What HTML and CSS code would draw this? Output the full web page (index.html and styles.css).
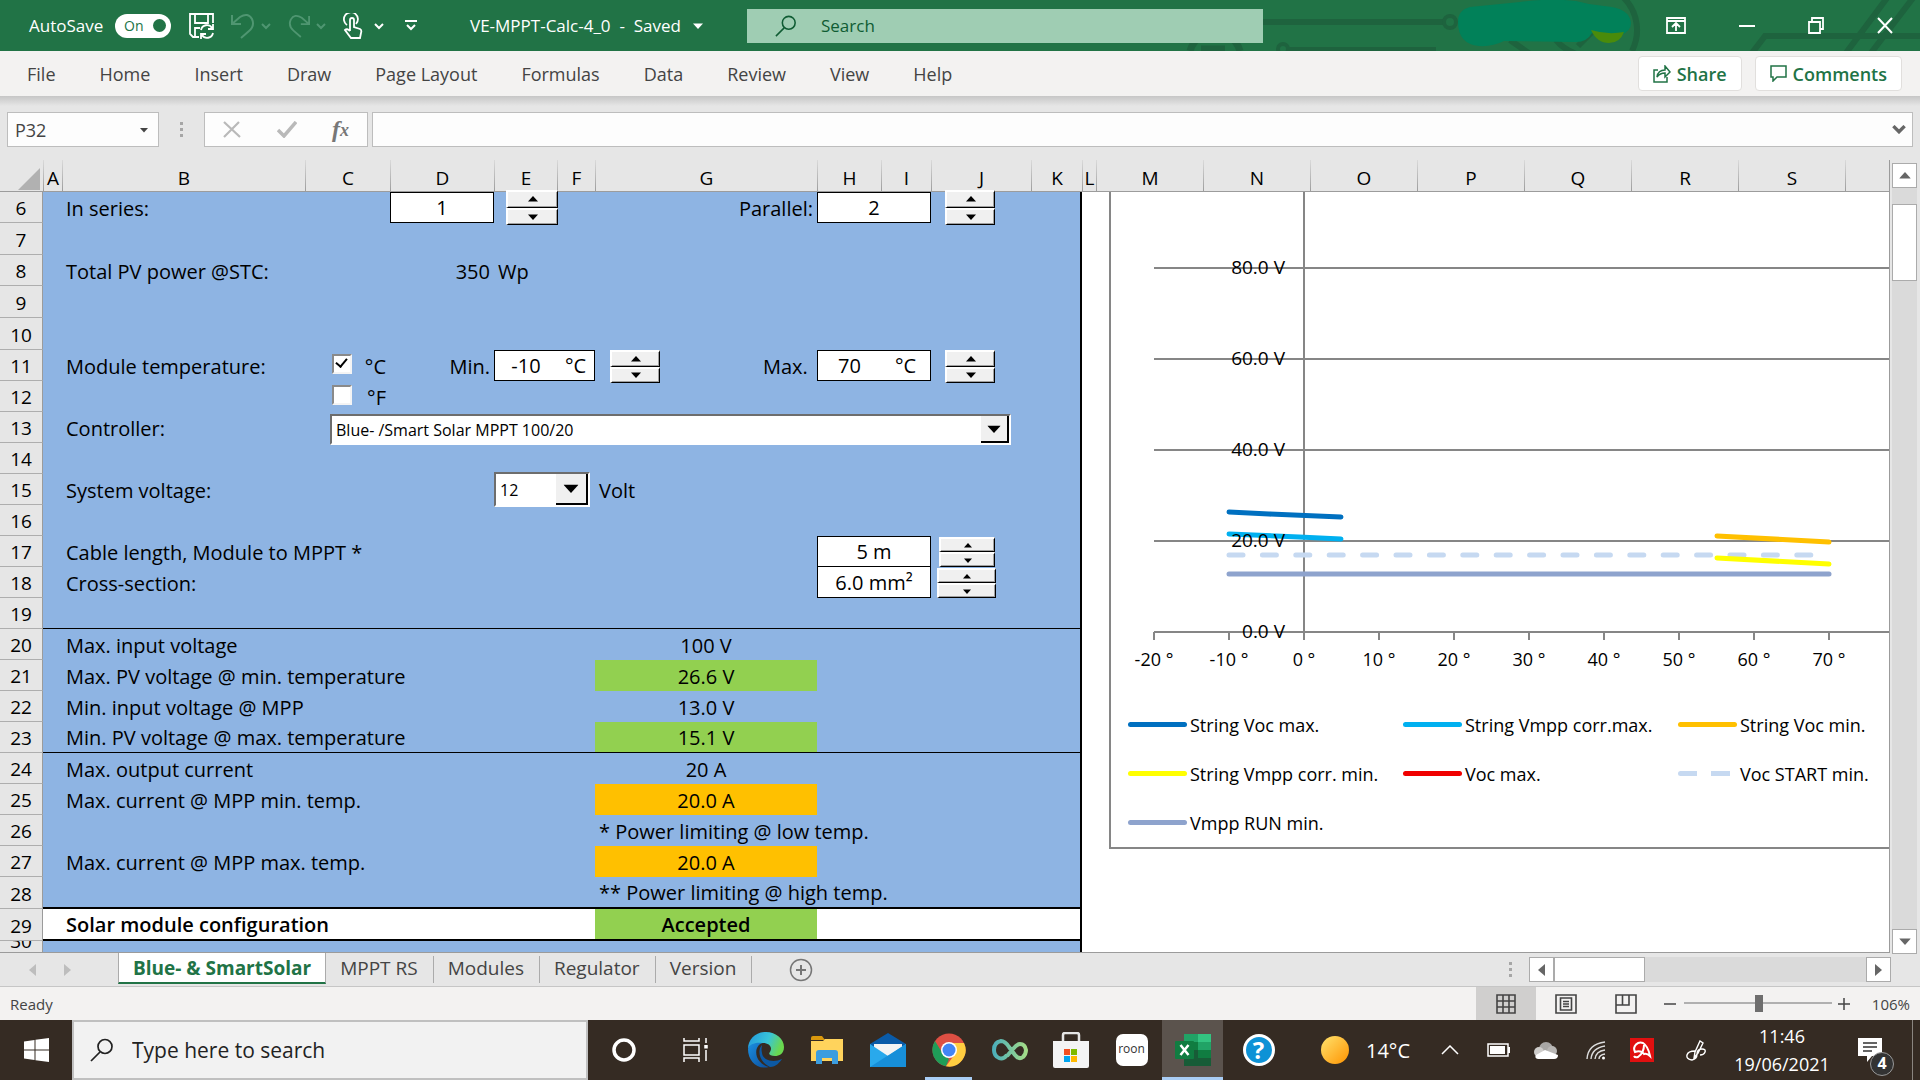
FILE: index.html
```html
<!DOCTYPE html>
<html lang="en">
<head>
<meta charset="utf-8">
<title>VE-MPPT-Calc-4_0 - Excel</title>
<link rel="stylesheet" href="styles.css">
</head>
<body>
<svg class="defs" aria-hidden="true">
  <symbol id="chev" viewBox="0 0 12 8"><path d="M2 2l4 4 4-4" fill="none" stroke="currentColor" stroke-width="2"/></symbol>
  <symbol id="up" viewBox="0 0 10 6"><path d="M5 0l5 5.500H0z" fill="currentColor"/></symbol>
  <symbol id="down" viewBox="0 0 10 6"><path d="M0 .5h10L5 6z" fill="currentColor"/></symbol>
  <symbol id="left" viewBox="0 0 7 12"><path d="M7 0v12L0 6z" fill="currentColor"/></symbol>
  <symbol id="right" viewBox="0 0 7 12"><path d="M0 0v12l7-6z" fill="currentColor"/></symbol>
  <symbol id="lens" viewBox="0 0 24 24"><circle cx="15" cy="8.500" r="7" fill="none" stroke="currentColor" stroke-width="1.700"/><path d="M10 14L1 23" stroke="currentColor" stroke-width="1.700"/></symbol>
</svg>

<header class="title-bar">
  <svg class="circuit" width="760" height="51" viewBox="1160 0 760 51" aria-hidden="true">
    <g fill="none" stroke="#1e633e" stroke-width="6">
      <path d="M1260 22h183"/><circle cx="1450" cy="22" r="6" stroke-width="4"/>
      <path d="M1190 51a26 26 0 0 1 50 0" stroke-width="7"/><path d="M1201 49h24" stroke-width="7"/>
      <circle cx="1283" cy="49" r="5" stroke-width="4"/><path d="M1288 50h148"/>
      <path d="M1752 53l13-17h155M1846 53l41-55M1871 53l42-55"/>
      <path d="M1624-2a46 46 0 0 1 8 53M1556 40q6 8 20 14M1510 40l20 14M1578 46l20-20"/>
    </g>
    <path d="M1458 22q0-12 12-15l50-5q30-4 56-1 14 4 28 5 26 2 27 17 0 8-10 12-14 6-29-2-5 9-16 9l-72-1q-12 6-25 5-21-2-21-24z" fill="#018159"/>
    <path d="M1591 30q16 5 33 2-4 11-15 11-12 0-18-13z" fill="#4a8b0b"/>
  </svg>
  <label class="autosave">AutoSave
    <button class="toggle" type="button" role="switch" aria-checked="true">On<span class="knob"></span></button>
  </label>
  <div class="quick">
    <button type="button" aria-label="Save"><svg width="26" height="26" viewBox="0 0 26 26" fill="none" stroke="#fff" stroke-width="1.800"><path d="M10 24H4l-3-3V1h23v9M6 1v9h13V1M6 23v-8h5"/><path d="M12 17a6 6 0 0 1 11-2M24 11v5h-5M24 20a6 6 0 0 1-11 2M12 26v-5h5"/></svg></button>
    <button type="button" class="dim" aria-label="Undo"><svg width="24" height="26" viewBox="0 0 24 26" fill="none" stroke="currentColor" stroke-width="2"><path d="M1 2v9h9M1 11L9 4q8-5 12 2 3 7-3 12l-8 7"/></svg><svg width="12" height="8"><use href="#chev"/></svg></button>
    <button type="button" class="dim" aria-label="Redo"><svg width="22" height="26" viewBox="0 0 24 26" fill="none" stroke="currentColor" stroke-width="2"><path d="M23 2v9h-9M23 11l-8-7q-8-5-12 2-3 7 3 12l8 7"/></svg><svg width="12" height="8"><use href="#chev"/></svg></button>
    <button type="button" class="touch" aria-label="Touch mode"><svg width="20" height="26" viewBox="0 0 20 26" fill="none" stroke="#fff" stroke-width="1.800"><path d="M4 12a7 7 0 1 1 9-1"/><path d="M7 18V7q0-2 2-2t2 2v7l6 2q2 1 1 4l-1 5H8l-6-8q2-2 5 1M11 10V7a2 2 0 1 0-4 0"/></svg><svg width="12" height="8"><use href="#chev"/></svg></button>
    <button type="button" aria-label="Customize toolbar"><svg width="12" height="12" viewBox="0 0 12 12" fill="none" stroke="#fff" stroke-width="2"><path d="M0 1h12M2 5l4 4 4-4"/></svg></button>
  </div>
  <button class="doc" type="button">VE-MPPT-Calc-4_0 &nbsp;-&nbsp; Saved <svg width="10" height="6"><use href="#down"/></svg></button>
  <label class="search"><svg width="22" height="22"><use href="#lens"/></svg><input type="text" placeholder="Search" aria-label="Search"></label>
  <div class="window-buttons">
    <button type="button" aria-label="Ribbon display"><svg width="20" height="17" viewBox="0 0 20 17" fill="none" stroke="#fff" stroke-width="1.800"><path d="M1 1h18v15H1zM1 4h18M10 14V7M6 10l4-4 4 4"/></svg></button>
    <button type="button" aria-label="Minimize"><svg width="16" height="17" viewBox="0 0 16 17"><path d="M0 9h16" stroke="#fff" stroke-width="2"/></svg></button>
    <button type="button" aria-label="Restore"><svg width="16" height="17" viewBox="0 0 16 17" fill="none" stroke="#fff" stroke-width="1.800"><path d="M1 5h11v11H1zM4 5V1h11v11h-3"/></svg></button>
    <button type="button" aria-label="Close"><svg width="16" height="17" viewBox="0 0 16 17"><path d="M1 1l14 15M15 1L1 16" stroke="#fff" stroke-width="2"/></svg></button>
  </div>
</header>

<nav class="ribbon">
  <a href="#">File</a><a href="#">Home</a><a href="#">Insert</a><a href="#">Draw</a><a href="#">Page Layout</a><a href="#">Formulas</a><a href="#">Data</a><a href="#">Review</a><a href="#">View</a><a href="#">Help</a>
  <div class="ribbon-actions">
    <button type="button"><svg width="18" height="18" viewBox="0 0 18 18" fill="none" stroke="#217346" stroke-width="1.500"><path d="M5 5H1v12h13v-5"/><path d="M4 12q1-7 8-7V1l5 6-5 5V8q-5 0-8 4z"/></svg>Share</button>
    <button type="button"><svg width="17" height="17" viewBox="0 0 17 17" fill="none" stroke="#217346" stroke-width="1.500"><path d="M1 1h15v11H7l-4 4v-4H1z"/></svg>Comments</button>
  </div>
</nav>

<div class="formula-bar">
  <label class="name-box"><input type="text" value="P32" aria-label="Name box"><svg width="8" height="6"><use href="#down"/></svg></label>
  <span class="dots"><i></i><i></i><i></i></span>
  <div class="fx-buttons">
    <button type="button" aria-label="Cancel"><svg width="18" height="17" viewBox="0 0 18 17"><path d="M1 1l16 15M16 1L1 16" stroke="#b9b9b9" stroke-width="2.200"/></svg></button>
    <button type="button" aria-label="Enter"><svg width="20" height="17" viewBox="0 0 20 17"><path d="M1 9l6 6L19 1" fill="none" stroke="#b9b9b9" stroke-width="3.500"/></svg></button>
    <button type="button" class="fx" aria-label="Insert function">f<sub>x</sub></button>
  </div>
  <label class="formula"><input type="text" aria-label="Formula"><svg width="14" height="9" viewBox="0 0 12 8"><path d="M1 1l5 5 5-5" fill="none" stroke="#666" stroke-width="3"/></svg></label>
</div>

<main class="sheet">
  <div class="grid">
    <table>
      <colgroup><col class="w-head"><col class="w-a"><col class="w-b"><col class="w-c"><col class="w-d"><col class="w-e"><col class="w-f"><col class="w-g"><col class="w-h"><col class="w-i"><col class="w-j"><col class="w-k"><col class="w-l"><col class="w-m"><col class="w-m"><col class="w-m"><col class="w-m"><col class="w-m"><col class="w-m"><col class="w-m"><col></colgroup>
      <thead>
        <tr><th class="corner"><svg width="22" height="22" viewBox="0 0 22 22"><path d="M22 0v22H0z" fill="#b1b1b1"/></svg></th><th>A</th><th>B</th><th>C</th><th>D</th><th>E</th><th>F</th><th>G</th><th>H</th><th>I</th><th>J</th><th>K</th><th>L</th><th>M</th><th>N</th><th>O</th><th>P</th><th>Q</th><th>R</th><th>S</th><th></th></tr>
      </thead>
      <tbody>
        <tr><th>6</th><td></td><td colspan="2">In series:</td><td class="box mid">1</td><td><span class="spin cut s-e"><button type="button" aria-label="More"><svg width="10" height="6"><use href="#up"/></svg></button><button type="button" aria-label="Less"><svg width="10" height="6"><use href="#down"/></svg></button></span></td><td></td><td class="end">Parallel:</td><td class="box mid" colspan="2">2</td><td><span class="spin cut s-j"><button type="button" aria-label="More"><svg width="10" height="6"><use href="#up"/></svg></button><button type="button" aria-label="Less"><svg width="10" height="6"><use href="#down"/></svg></button></span></td><td class="last"></td></tr>
        <tr class="tall"><th>7</th><td colspan="10"></td><td class="last"></td></tr>
        <tr><th>8</th><td></td><td colspan="2">Total PV power @STC:</td><td class="end">350</td><td>Wp</td><td colspan="5"></td><td class="last"></td></tr>
        <tr class="tall"><th>9</th><td colspan="10"></td><td class="last"></td></tr>
        <tr class="tall"><th>10</th><td colspan="10"></td><td class="last"></td></tr>
        <tr><th>11</th><td></td><td>Module temperature:</td><td class="end"><input class="tick" type="checkbox" id="deg-c" checked><label for="deg-c">°C</label></td><td class="end">Min.</td><td class="box mid open-r">-10</td><td class="box mid open-l">°C</td><td class="end"><span class="spin s-g"><button type="button" aria-label="More"><svg width="10" height="6"><use href="#up"/></svg></button><button type="button" aria-label="Less"><svg width="10" height="6"><use href="#down"/></svg></button></span>Max.&nbsp;</td><td class="box mid open-r">70</td><td class="box mid open-l">°C</td><td><span class="spin s-j"><button type="button" aria-label="More"><svg width="10" height="6"><use href="#up"/></svg></button><button type="button" aria-label="Less"><svg width="10" height="6"><use href="#down"/></svg></button></span></td><td class="last"></td></tr>
        <tr><th>12</th><td></td><td></td><td class="end"><input class="tick" type="checkbox" id="deg-f"><label for="deg-f">°F</label></td><td colspan="7"></td><td class="last"></td></tr>
        <tr><th>13</th><td></td><td><label for="controller">Controller:</label></td><td colspan="8"><span class="combo wide"><select id="controller"><option>Blue- /Smart Solar MPPT 100/20</option></select><span class="drop"><svg width="14" height="8" viewBox="0 0 10 6"><use href="#down"/></svg></span></span></td><td class="last"></td></tr>
        <tr><th>14</th><td colspan="10"></td><td class="last"></td></tr>
        <tr><th>15</th><td></td><td colspan="3"><label for="voltage">System voltage:</label></td><td colspan="2"><span class="combo volt"><select id="voltage"><option>12</option></select><span class="drop"><svg width="16" height="9" viewBox="0 0 10 6"><use href="#down"/></svg></span></span></td><td>Volt</td><td colspan="3"></td><td class="last"></td></tr>
        <tr><th>16</th><td colspan="10"></td><td class="last"></td></tr>
        <tr><th>17</th><td></td><td colspan="6">Cable length, Module to MPPT *</td><td class="box mid" colspan="2">5 m</td><td><span class="spin s-len"><button type="button" aria-label="More"><svg width="8" height="5"><use href="#up"/></svg></button><button type="button" aria-label="Less"><svg width="8" height="5"><use href="#down"/></svg></button></span></td><td class="last"></td></tr>
        <tr><th>18</th><td></td><td colspan="6">Cross-section:</td><td class="box mid under" colspan="2">6.0 mm²</td><td><span class="spin s-area"><button type="button" aria-label="More"><svg width="8" height="5"><use href="#up"/></svg></button><button type="button" aria-label="Less"><svg width="8" height="5"><use href="#down"/></svg></button></span></td><td class="last"></td></tr>
        <tr class="rule"><th>19</th><td colspan="10"></td><td class="last"></td></tr>
        <tr><th>20</th><td></td><td colspan="5">Max. input voltage</td><td class="mid">100 V</td><td colspan="3"></td><td class="last"></td></tr>
        <tr><th>21</th><td></td><td colspan="5">Max. PV voltage @ min. temperature</td><td class="mid ok">26.6 V</td><td colspan="3"></td><td class="last"></td></tr>
        <tr><th>22</th><td></td><td colspan="5">Min. input voltage @ MPP</td><td class="mid">13.0 V</td><td colspan="3"></td><td class="last"></td></tr>
        <tr class="rule"><th>23</th><td></td><td colspan="5">Min. PV voltage @ max. temperature</td><td class="mid ok">15.1 V</td><td colspan="3"></td><td class="last"></td></tr>
        <tr><th>24</th><td></td><td colspan="5">Max. output current</td><td class="mid">20 A</td><td colspan="3"></td><td class="last"></td></tr>
        <tr><th>25</th><td></td><td colspan="5">Max. current @ MPP min. temp.</td><td class="mid warn">20.0 A</td><td colspan="3"></td><td class="last"></td></tr>
        <tr><th>26</th><td></td><td colspan="5"></td><td colspan="4">* Power limiting @ low temp.</td><td class="last"></td></tr>
        <tr><th>27</th><td></td><td colspan="5">Max. current @ MPP max. temp.</td><td class="mid warn">20.0 A</td><td colspan="3"></td><td class="last"></td></tr>
        <tr class="tall thick"><th>28</th><td></td><td colspan="5"></td><td colspan="4">** Power limiting @ high temp.</td><td class="last"></td></tr>
        <tr class="tall thick result"><th>29</th><td></td><td colspan="5">Solar module configuration</td><td class="mid ok">Accepted</td><td colspan="3"></td><td class="last"></td></tr>
        <tr class="short rule"><th><span>30</span></th><td colspan="10"></td><td class="last"></td></tr>
      </tbody>
    </table>

    <figure class="chart">
      <svg width="100%" height="500" aria-label="String voltage over temperature">
        <g stroke="#868686" stroke-width="2" fill="none">
          <path d="M42 76h900M42 167h900M42 258h900M42 349h900"/>
          <path d="M42 440h900M192 0v440M42 440v8M117 440v8M192 440v8M267 440v8M342 440v8M417 440v8M492 440v8M567 440v8M642 440v8M717 440v8"/>
        </g>
        <g fill="none" stroke-width="5" stroke-linecap="round">
          <path d="M117 382h600" stroke="#8ea3cd"/>
          <path d="M117 363h586" stroke="#c6d9f1" stroke-dasharray="14 19.400"/>
          <path d="M117 320l40 2 72 3" stroke="#0070c0"/>
          <path d="M117 342l70 3 42 2" stroke="#00b0f0"/>
          <path d="M605 344l112 6" stroke="#ffc000"/>
          <path d="M605 366l112 6" stroke="#ffff00"/>
        </g>
        <g class="volts" text-anchor="end">
          <text x="173" y="82">80.0 V</text><text x="173" y="173">60.0 V</text><text x="173" y="264">40.0 V</text><text x="173" y="355">20.0 V</text><text x="173" y="446">0.0 V</text>
        </g>
        <g text-anchor="middle">
          <text x="42" y="474">-20 °</text><text x="117" y="474">-10 °</text><text x="192" y="474">0 °</text><text x="267" y="474">10 °</text><text x="342" y="474">20 °</text><text x="417" y="474">30 °</text><text x="492" y="474">40 °</text><text x="567" y="474">50 °</text><text x="642" y="474">60 °</text><text x="717" y="474">70 °</text>
        </g>
      </svg>
      <ul class="legend">
        <li><i class="k-navy"></i>String Voc max.</li><li><i class="k-cyan"></i>String Vmpp corr.max.</li><li><i class="k-gold"></i>String Voc min.</li>
        <li><i class="k-yellow"></i>String Vmpp corr. min.</li><li><i class="k-red"></i>Voc max.</li><li><i class="k-dash"></i>Voc START min.</li>
        <li><i class="k-steel"></i>Vmpp RUN min.</li>
      </ul>
    </figure>
  </div>
  <div class="v-scroll">
    <button type="button" aria-label="Scroll up"><svg width="12" height="7" viewBox="0 0 10 6"><use href="#up"/></svg></button>
    <div class="track"><div class="thumb"></div></div>
    <button type="button" aria-label="Scroll down"><svg width="12" height="7" viewBox="0 0 10 6"><use href="#down"/></svg></button>
  </div>
</main>

<div class="sheet-tabs">
  <div class="tab-arrows"><svg width="7" height="12"><use href="#left"/></svg><svg width="7" height="12"><use href="#right"/></svg></div>
  <a class="tab active" href="#">Blue- &amp; SmartSolar</a><a class="tab" href="#">MPPT RS</a><a class="tab" href="#">Modules</a><a class="tab" href="#">Regulator</a><a class="tab" href="#">Version</a>
  <button class="add" type="button" aria-label="New sheet"><svg width="24" height="24" viewBox="0 0 24 24" fill="none" stroke="#767676" stroke-width="1.500"><circle cx="12" cy="12" r="10.500"/><path d="M12 7v10M7 12h10" stroke-width="2"/></svg></button>
  <span class="dots"><i></i><i></i><i></i></span>
  <div class="h-scroll">
    <button type="button" aria-label="Scroll left"><svg width="7" height="12"><use href="#left"/></svg></button>
    <div class="track"><div class="thumb"></div></div>
    <button type="button" aria-label="Scroll right"><svg width="7" height="12"><use href="#right"/></svg></button>
  </div>
</div>

<div class="status">
  <span class="ready">Ready</span>
  <button type="button" class="view on" aria-label="Normal"><svg width="20" height="20" viewBox="0 0 20 20" fill="none" stroke="#444" stroke-width="1.600"><path d="M1 1h18v18H1zM1 7h18M1 13h18M7 1v18M13 1v18"/></svg></button>
  <button type="button" class="view" aria-label="Page layout"><svg width="22" height="20" viewBox="0 0 22 20" fill="none" stroke="#444" stroke-width="1.600"><path d="M1 1h20v18H1zM5.500 4h11v12h-11zM8 7.500h6M8 10h6M8 12.500h6"/></svg></button>
  <button type="button" class="view" aria-label="Page break preview"><svg width="22" height="20" viewBox="0 0 22 20" fill="none" stroke="#444" stroke-width="1.600"><path d="M1 1h20v18H1zM1 11h13V1M7.500 1v10"/></svg></button>
  <button type="button" class="zoom-step zoom-out" aria-label="Zoom out"><svg width="12" height="12"><path d="M0 6h12" stroke="#444" stroke-width="1.500"/></svg></button>
  <input class="zoom" type="range" min="0" max="100" value="51" aria-label="Zoom">
  <button type="button" class="zoom-step" aria-label="Zoom in"><svg width="12" height="12"><path d="M0 6h12M6 0v12" stroke="#444" stroke-width="1.500"/></svg></button>
  <span class="percent">106%</span>
</div>

<footer class="taskbar">
  <button class="start" type="button" aria-label="Start"><svg width="25" height="24" viewBox="0 0 25 24" fill="#fff"><path d="M0 3.500L10.500 2v9.500H0zM11.500 1.800L25 0v11.500H11.500zM0 12.500h10.500V22L0 20.500zM11.500 12.500H25V24l-13.500-1.800z"/></svg></button>
  <label class="task-search"><svg width="24" height="24"><use href="#lens"/></svg><input type="text" placeholder="Type here to search" aria-label="Type here to search"></label>
  <div class="apps">
    <button type="button" class="sys" aria-label="Cortana"><svg width="26" height="26" viewBox="0 0 26 26"><circle cx="13" cy="13" r="10" fill="none" stroke="#fff" stroke-width="3.500"/></svg></button>
    <button type="button" class="sys" aria-label="Task view"><svg width="26" height="24" viewBox="0 0 26 24" fill="none" stroke="#fff" stroke-width="1.500"><path d="M1 0v3h15V0M1 24v-4h15v4M1 7h15v10H1zM23 0v5M23 12v11"/><path d="M23 7v3.500" stroke-width="3.500"/></svg></button>
    <button type="button" aria-label="Edge"><svg width="36" height="36" viewBox="0 0 36 36"><defs><linearGradient id="e1" x1="0" y1="0" x2="1" y2=".3"><stop offset="0" stop-color="#2196dd"/><stop offset=".6" stop-color="#39c5d8"/><stop offset="1" stop-color="#6ad84f"/></linearGradient><linearGradient id="e2" x1="0" y1="0" x2="1" y2="1"><stop offset="0" stop-color="#1b8fe0"/><stop offset="1" stop-color="#0b4d9c"/></linearGradient></defs><path d="M0 17C0 7 8 0 18 0s18 7 18 15c0 7-5 9-9 9-5 0-7-2-5-4 3-5-1-9-7-9C7 11 1 14 0 17z" fill="url(#e1)"/><path d="M0 17c1-5 8-7 14-6-5 2-7 8-5 14 2 5 7 9 12 10-12 3-21-6-21-18z" fill="url(#e2)"/><path d="M14 13c-5 5-3 17 8 22 6 0 10-5 12-8-8 4-19 2-20-6-1-4 0-6 0-8z" fill="#0c59a4"/></svg></button>
    <button type="button" aria-label="File Explorer"><svg width="34" height="28" viewBox="0 0 34 28"><path d="M1 2q0-2 2-2h9l3 4H1z" fill="#d9980d"/><path d="M1 5h12l2-2h18v22H1z" fill="#ffd35c"/><path d="M6 28V17q0-3 3-3h16q3 0 3 3v11h-6v-6H12v6z" fill="#3c9ddf"/></svg></button>
    <button type="button" aria-label="Mail"><svg width="36" height="34" viewBox="0 0 36 34"><path d="M0 11L18 0l18 11v8H0z" fill="#0a5ba8"/><path d="M4 11h28v14H4z" fill="#f4f4f4"/><path d="M0 11l18 12 18-12v23H0z" fill="#29a9ec"/><path d="M0 34l36-23v23z" fill="#178fd9"/></svg></button>
    <button type="button" class="running" aria-label="Chrome"><svg width="34" height="34" viewBox="0 0 34 34"><circle cx="17" cy="17" r="16.500" fill="#dd4f43"/><path d="M3 8l8 13 6 5-3 7.300A16.500 16.500 0 0 1 3 8z" fill="#1f9d58"/><path d="M17 10h15a16.500 16.500 0 0 1-18 23.300L23 21z" fill="#ffcd40"/><circle cx="17" cy="17" r="8" fill="#fff"/><circle cx="17" cy="17" r="6.500" fill="#4285f4"/></svg></button>
    <button type="button" aria-label="Infinity"><svg width="36" height="24" viewBox="0 0 36 24" fill="none" stroke-width="4"><defs><linearGradient id="inf"><stop offset="0" stop-color="#4dafb9"/><stop offset="1" stop-color="#a2dc88"/></linearGradient></defs><path d="M15 17q-4 5-8 3-5-2-5-8 0-8 7-9 4 0 8 6l6 8q4 5 8 2 3-3 3-7-1-6-6-6-3 0-7 5l-6 7" stroke="url(#inf)"/></svg></button>
    <button type="button" aria-label="Store"><svg width="36" height="36" viewBox="0 0 36 36"><path d="M10 10V3q0-2 2-2h12q2 0 2 2v7" fill="none" stroke="#e5e5e5" stroke-width="2.500"/><path d="M0 9h36v25q0 2-2 2H2q-2 0-2-2z" fill="#f4f4f4"/><path d="M11 17h6v6h-6z" fill="#f25022"/><path d="M18 17h6v6h-6z" fill="#7fba00"/><path d="M11 24h6v6h-6z" fill="#00a4ef"/><path d="M18 24h6v6h-6z" fill="#ffb900"/></svg></button>
    <button type="button" class="roon"><span>roon</span></button>
    <button type="button" class="running current" aria-label="Excel"><svg width="36" height="34" viewBox="0 0 36 34"><path d="M9 1h27v31q0 1-1 1H9z" fill="#21a366"/><path d="M9 9h14v8H9z" fill="#107c41"/><path d="M23 1h13v8H23z" fill="#33c481"/><path d="M23 17h13v8H23z" fill="#107c41"/><path d="M9 17h14v8H9zM9 25h27v8H9z" fill="#185c37"/><rect y="8" width="19" height="18" rx="1" fill="#107c41"/><path d="M5.500 12l8 10M13.500 12l-8 10" stroke="#fff" stroke-width="2.500"/></svg></button>
    <button type="button" class="help" aria-label="Help"><span>?</span></button>
  </div>
  <div class="tray">
    <svg width="28" height="28" viewBox="0 0 28 28"><defs><linearGradient id="sun" x1="0" y1="0" x2="1" y2="1"><stop offset="0" stop-color="#ffe36e"/><stop offset="1" stop-color="#ff9300"/></linearGradient></defs><circle cx="14" cy="14" r="14" fill="url(#sun)"/></svg>
    <span class="temp">14°C</span>
    <svg class="t-up" width="18" height="10" viewBox="0 0 18 10"><path d="M1 9l8-8 8 8" fill="none" stroke="#fff" stroke-width="1.500"/></svg>
    <svg class="t-bat" width="23" height="14" viewBox="0 0 23 14"><path d="M1 1h20v12H1z" fill="none" stroke="#fff" stroke-width="1.500"/><path d="M3 3h15v8H3zM21 4h2v6h-2z" fill="#fff"/></svg>
    <svg class="t-cloud" width="24" height="17" viewBox="0 0 24 17"><circle cx="12" cy="7" r="7" fill="#a8a6a4"/><circle cx="5" cy="10" r="5" fill="#cfcdcb"/><circle cx="18" cy="9" r="5" fill="#b8b6b4"/><path d="M4 17q-4-1-2-4l9-5 13 5q0 4-4 4z" fill="#fff"/></svg>
    <svg class="t-wifi" width="20" height="19" viewBox="0 0 20 19" fill="none" stroke="#ddd" stroke-width="1.400"><path d="M1 18Q2 3 19 1M5 18Q6 7 19 5M9 18q1-8 10-9M13 18q0-4 6-5"/><circle cx="17.500" cy="17" r="1.500" fill="#fff" stroke="none"/></svg>
    <svg class="t-av" width="24" height="24" viewBox="0 0 24 24"><path d="M0 0h24v24H0z" fill="#e11010"/><path d="M5 14C2 8 8 3 13 5q5 3 7 13-3-3-6-2-3-4-9-2zM14 7q0 8-6 12-3 1-4-1" fill="none" stroke="#fff" stroke-width="2"/></svg>
    <svg class="t-pen" width="20" height="21" viewBox="0 0 20 21" fill="none" stroke="#fff" stroke-width="1.400"><path d="M8 18l1-6 5-11 3 2-5 10zM9 11q-7 0-8 4t5 5q5-1 5-6 0-5 5-5 4 0 3 3t-5 3"/></svg>
    <time class="clock" datetime="2021-06-19T11:46"><span>11:46</span><span>19/06/2021</span></time>
    <button class="notes" type="button" aria-label="Notifications"><svg width="24" height="24" viewBox="0 0 24 24"><path d="M0 0h24v18H14l-5 6v-6H0z" fill="#fff"/><path d="M5 5h14M5 9h14M5 13h9" stroke="#333" stroke-width="1.500"/></svg><span class="badge">4</span></button>
    <span class="peek"></span>
  </div>
</footer>
</body>
</html>
```
FILE: styles.css
```css
* { box-sizing: border-box; }
body {
  margin: 0;
  height: 100vh;
  display: flex;
  flex-direction: column;
  overflow: hidden;
  font-family: "Open Sans", "Noto Sans", sans-serif;
  font-size: 17px;
  color: #444;
  background: #e6e6e6;
}
button, input, select { font: inherit; color: inherit; }
button { padding: 0; border: 0; background: none; display: flex; align-items: center; justify-content: center; }
input { border: 0; background: none; padding: 0; min-width: 0; outline: 0; }
a { color: inherit; text-decoration: none; }
svg { flex: none; display: block; }
.defs { position: absolute; width: 0; height: 0; }

/* title bar */
.title-bar { position: relative; height: 51px; flex: none; display: flex; align-items: center; padding-left: 29px; background: #217346; color: #fff; font-size: 17px; }
.title-bar > * { position: relative; }
.title-bar .circuit { position: absolute; right: 0; top: 0; }
.autosave { display: flex; align-items: center; width: 160px; justify-content: space-between; white-space: nowrap; padding-right: 18px; }
.toggle { width: 56px; height: 24px; border-radius: 12px; background: #fff; color: #217346; font-size: 14px; justify-content: space-between; padding: 0 5px 0 9px; }
.knob { width: 13px; height: 13px; border-radius: 50%; background: #217346; }
.quick { display: flex; align-items: center; width: 281px; gap: 16px; }
.quick button { gap: 5px; }
.quick .touch { gap: 10px; margin-right: 4px; }
.dim { color: #4f9671; }
.doc { gap: 12px; width: 277px; justify-content: flex-start; white-space: nowrap; }
.search { display: flex; align-items: center; gap: 24px; width: 516px; height: 34px; padding-left: 28px; background: #9fcdb3; color: #0f5c33; }
.search input::placeholder, .task-search input::placeholder { color: inherit; opacity: 1; }
.window-buttons { margin-left: auto; display: flex; gap: 53px; padding-right: 27px; }

/* ribbon */
.ribbon { height: 45px; flex: none; display: flex; align-items: center; gap: 44px; padding: 0 18px 0 27px; background: #f3f2f1; font-size: 18px; white-space: nowrap; }
.ribbon-actions { margin-left: auto; display: flex; gap: 13px; }
.ribbon-actions button { height: 35px; padding: 0 14px; gap: 6px; border: 1px solid #e1dfdd; border-radius: 4px; background: #fff; color: #217346; font-weight: 600; font-size: 18px; }

/* formula bar */
.formula-bar { height: 64px; flex: none; display: flex; padding: 16px 7px 13px; background: linear-gradient(#c6c6c6, #e6e6e6 10px); }
.name-box, .fx-buttons, .formula { display: flex; align-items: center; border: 1px solid #bdbdbd; background: #fdfdfd; }
.name-box { width: 152px; padding: 0 10px 0 7px; color: #444; font-size: 18px; }
.name-box input { flex: 1; }
.dots { width: 45px; display: flex; flex-direction: column; align-items: center; justify-content: center; gap: 3px; }
.dots i { width: 3px; height: 3px; background: #a6a6a6; }
.fx-buttons { width: 164px; justify-content: space-between; padding: 0 18px; }
.fx { font: italic 700 24px "Liberation Serif", serif; color: #777; }
.fx sub { font-size: 18px; line-height: 0; vertical-align: -3px; }
.formula { flex: 1; margin-left: 4px; padding-right: 6px; }
.formula input { flex: 1; }

/* worksheet */
.sheet { flex: 1; min-height: 0; display: flex; }
.grid { flex: 1; position: relative; overflow: hidden; background: #fff; border-right: 1px solid #9b9b9b; border-bottom: 1px solid #9b9b9b; font-size: 20px; color: #000; }
table { table-layout: fixed; width: 100%; min-width: 1846px; border-collapse: separate; border-spacing: 0; }
.w-head { width: 43px; } .w-a { width: 19px; } .w-b { width: 243px; } .w-c { width: 85px; }
.w-d { width: 104px; } .w-e { width: 63px; } .w-f { width: 38px; } .w-g { width: 222px; }
.w-h { width: 64px; } .w-i { width: 50px; } .w-j { width: 100px; } .w-k { width: 51px; }
.w-l { width: 14px; } .w-m { width: 107px; }
th { font-weight: 400; padding: 0; background: #e6e6e6; font-size: 19px; }
thead th { position: relative; z-index: 1; height: 32px; padding-top: 5px; line-height: 26px; border-left: 1px solid; border-bottom: 1px solid #9b9b9b; border-image: linear-gradient(#dcdcdc, #9b9b9b) 1; }
thead .corner { border-left: 0; }
.corner svg { margin: 2px 3px 0 auto; }
tbody th { height: 31px; padding-top: 2px; line-height: 26px; border-right: 1px solid #9b9b9b; border-bottom: 1px solid #aeaeae; text-align: center; }
td { position: relative; height: 31px; padding: 2px 4px 0; line-height: 26px; background: #8eb4e3; white-space: nowrap; }
.tall td, .tall th { height: 32px; }
.short td, .short th { height: 12px; padding-top: 0; line-height: 11px; }
.short th span { display: block; height: 11px; overflow: hidden; line-height: 0; }
.last { border-right: 2px solid #000; }
.end { text-align: right; }
.mid { text-align: center; }
.box { background: #fff; border: 1px solid #000; padding-top: 1px; }
.open-r { border-right: 0; }
.open-l { border-left: 0; padding-left: 0; padding-right: 0; }
.under { border-top: 0; }
.rule td { border-bottom: 1px solid #000; }
.thick td { border-bottom: 2px solid #000; }
.result td { background: #fff; font-weight: 600; }
td.ok { background: #92d050; }
td.warn { background: #ffc000; }

/* form controls that float over the cells */
.spin { position: absolute; top: 0; width: 50px; height: 33px; display: flex; flex-direction: column; z-index: 1; }
.spin button { flex: 1; background: #f0f0f0; border: 2px solid; border-color: #fff #000 #000 #fff; border-width: 2px 1px 1px 2px; color: #000; box-shadow: inset -1px -1px 0 #a0a0a0; }
.cut { top: -2px; height: 35px; }
.s-e { left: 12px; width: 52px; }
.s-j { left: 14px; }
.s-g { left: 15px; }
.s-len { left: 8px; width: 56px; height: 30px; top: 1px; }
.s-area { left: 6px; width: 59px; height: 30px; top: 1px; }
.tick { position: absolute; left: 27px; top: 4px; margin: 0; width: 20px; height: 20px; appearance: none; background: #fff; border: 2px solid; border-color: #8a8a8a #f4f4f4 #f4f4f4 #8a8a8a; }
.tick:checked::after { content: ""; position: absolute; left: 4px; top: 0; width: 5px; height: 9px; border: solid #000; border-width: 0 2px 2px 0; transform: rotate(40deg); }
.combo { position: absolute; display: flex; background: #fff; border: 2px solid; border-color: #6d6d6d #fff #fff #6d6d6d; font-size: 16px; z-index: 1; }
.combo select { appearance: none; border: 0; background: none; flex: 1; padding: 0 4px; outline: 0; min-width: 0; }
.wide { left: 25px; top: 2px; width: 681px; height: 31px; }
.volt { left: 0; top: -2px; width: 96px; height: 35px; }
.drop { width: 28px; display: flex; align-items: center; justify-content: center; background: #f0f0f0; border-right: 2px solid #000; border-bottom: 2px solid #000; pointer-events: none; }
.volt .drop { width: 32px; }

/* chart object */
.chart { position: absolute; left: 1109px; top: 32px; right: 0; height: 657px; margin: 0; padding-left: 1px; background: #fff; border-left: 2px solid #868686; border-bottom: 2px solid #868686; font-size: 18px; z-index: 1; overflow: hidden; }
.volts { font-size: 19px; }
.legend { list-style: none; margin: 0; padding: 8px 0 0 16px; display: grid; grid-template-columns: repeat(3, 275px); grid-auto-rows: 49px; }
.legend li { display: flex; align-items: center; gap: 3px; white-space: nowrap; }
.legend i { width: 59px; height: 5px; border-radius: 3px; }
.k-navy { background: #0070c0; } .k-cyan { background: #00b0f0; } .k-gold { background: #ffc000; }
.k-yellow { background: #ff0; } .k-red { background: #f00000; } .k-steel { background: #8ea3cd; }
.k-dash { background: linear-gradient(90deg, #c6d9f1 19px, #fff 19px 33px, #c6d9f1 33px 52px, #fff 52px); }

/* scroll bars */
.v-scroll { width: 30px; display: flex; flex-direction: column; padding: 3px 3px 0 2px; margin-bottom: -1px; }
.v-scroll button, .h-scroll button { width: 25px; height: 25px; flex: none; background: #fff; border: 1px solid #ababab; color: #666; }
.track { flex: 1; background: #dadada; }
.v-scroll .track { padding-top: 16px; }
.thumb { background: #fff; border: 1px solid #ababab; }
.v-scroll .thumb { height: 77px; }
.h-scroll { display: flex; width: 362px; height: 25px; margin: 4px 29px 0 0; }
.h-scroll .thumb { width: 91px; height: 25px; }

/* sheet tabs */
.sheet-tabs { height: 34px; flex: none; display: flex; border-bottom: 1px solid #c6c6c6; font-size: 19px; white-space: nowrap; }
.tab-arrows { width: 118px; display: flex; align-items: center; gap: 28px; padding-left: 29px; color: #bdbdbd; }
.tab { margin-top: 3px; height: 27px; line-height: 24px; padding: 0 15px 0 14px; border-right: 1px solid #ababab; }
.active { margin: 0; height: 31px; line-height: 30px; padding: 0 14px; background: #fff; color: #217346; font-weight: 700; border: solid #ababab; border-width: 0 1px; border-bottom: 2px solid #217346; }
.add { margin-left: 37px; }
.sheet-tabs .dots { margin-left: auto; width: 38px; }

/* status bar */
.status { height: 33px; flex: none; display: flex; align-items: center; padding: 0 10px; background: #f3f2f1; font-size: 15px; }
.ready { margin-right: auto; }
.view { width: 60px; height: 33px; }
.on { background: #d0cfce; }
.zoom-step { width: 24px; height: 33px; }
.zoom-out { width: 28px; }
.zoom { width: 148px; height: 17px; margin: 0; appearance: none; }
.zoom::-webkit-slider-runnable-track { height: 17px; background: linear-gradient(transparent 7px, #b0b0b0 7px 9px, transparent 9px); }
.zoom::-webkit-slider-thumb { appearance: none; width: 8px; height: 17px; background: #6e6e6e; }
.percent { width: 54px; text-align: right; }

/* taskbar */
.taskbar { height: 60px; flex: none; display: flex; background: #352b23; color: #fff; }
.start { width: 72px; }
.task-search { width: 516px; display: flex; align-items: center; gap: 18px; padding-left: 16px; background: #f2f2f2; border: 2px solid #c0c0c0; color: #222; font-size: 21px; }
.task-search input { flex: 1; }
.apps { display: flex; }
.apps button { width: 61px; position: relative; }
.apps .sys { width: 72px; }
.sys + .sys { margin-right: 3px; }
.apps .help { width: 71px; }
.running::after { content: ""; position: absolute; left: 7px; right: 7px; bottom: 0; height: 3px; background: #a9cdf5; }
.apps .current { background: #5b534d; }
.current::after { left: 0; right: 0; }
.roon span { width: 32px; height: 32px; border-radius: 7px; background: #fff; color: #333; font-size: 12px; line-height: 30px; text-align: center; }
.help span { width: 32px; height: 32px; border-radius: 50%; border: 3px solid #fff; background: #0d92d6; font-size: 24px; line-height: 26px; font-weight: 700; }
.tray { margin-left: auto; display: flex; align-items: center; font-size: 18px; white-space: nowrap; }
.temp { width: 43px; margin: 0 32px 0 17px; font-size: 20px; }
.t-up { margin-right: 28px; } .t-bat { margin-right: 24px; } .t-cloud { margin-right: 28px; }
.t-wifi { margin-right: 24px; } .t-av { margin-right: 32px; } .t-pen { margin-right: 24px; }
.clock { width: 104px; display: flex; flex-direction: column; align-items: center; line-height: 28px; }
.notes { position: relative; width: 24px; margin-left: 24px; align-self: stretch; }
.badge { position: absolute; left: 12px; top: 32px; width: 24px; height: 24px; border: 1px solid #999; border-radius: 50%; background: #333; font-weight: 700; font-size: 16px; line-height: 21px; }
.peek { width: 8px; margin-left: 30px; align-self: stretch; border-left: 1px solid #8a8580; }
```
